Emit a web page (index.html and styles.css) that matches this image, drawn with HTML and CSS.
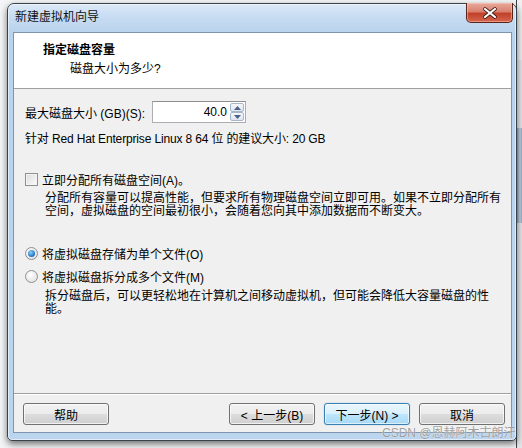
FILE: index.html
```html
<!DOCTYPE html>
<html lang="zh-CN">
<head>
<meta charset="utf-8">
<title>新建虚拟机向导</title>
<link rel="stylesheet" href="styles.css">
</head>
<body>
<div class="screen">
  <div class="side">
    <div class="side-thumb"></div>
  </div>
  <div class="window">
    <div class="titlebar">
      <span class="title">新建虚拟机向导</span>
      <div class="close">
        <svg width="16" height="12" viewBox="0 0 16 12"><path d="M3 2 L13 10 M13 2 L3 10" stroke="#3a1a14" stroke-width="3.6" stroke-linecap="round"/><path d="M3 2 L13 10 M13 2 L3 10" stroke="#ffffff" stroke-width="2.2" stroke-linecap="round"/></svg>
      </div>
    </div>
    <div class="client">
      <div class="header">
        <div class="h-title">指定磁盘容量</div>
        <div class="h-sub">磁盘大小为多少?</div>
      </div>
      <div class="body">
        <div class="size-row">
          <span class="size-label">最大磁盘大小 (GB)(S):</span>
          <div class="spin">
            <span class="spin-val">40.0</span>
            <div class="arrows">
              <div class="arrow up"><svg width="7" height="4" viewBox="0 0 7 4"><path d="M0 4 L3.5 0 L7 4 Z" fill="#4d6185"/></svg></div>
              <div class="arrow down"><svg width="7" height="4" viewBox="0 0 7 4"><path d="M0 0 L3.5 4 L7 0 Z" fill="#4d6185"/></svg></div>
            </div>
          </div>
        </div>
        <div class="hint">针对 Red Hat Enterprise Linux 8 64 位 的建议大小: 20 GB</div>
        <div class="opt-row check-row"><span class="checkbox"></span><span>立即分配所有磁盘空间(A)。</span></div>
        <p class="desc">分配所有容量可以提高性能，但要求所有物理磁盘空间立即可用。如果不立即分配所有<br>空间，虚拟磁盘的空间最初很小，会随着您向其中添加数据而不断变大。</p>
        <div class="opt-row radio-row first"><span class="radio on"></span><span>将虚拟磁盘存储为单个文件(O)</span></div>
        <div class="opt-row radio-row"><span class="radio"></span><span>将虚拟磁盘拆分成多个文件(M)</span></div>
        <p class="desc desc2">拆分磁盘后，可以更轻松地在计算机之间移动虚拟机，但可能会降低大容量磁盘的性<br>能。</p>
      </div>
      <div class="footer">
        <button class="btn help">帮助</button>
        <div class="nav">
          <button class="btn">&lt; 上一步(B)</button>
          <button class="btn default">下一步(N) &gt;</button>
          <button class="btn cancel">取消</button>
        </div>
      </div>
    </div>
  </div>
  <div class="watermark">CSDN @恩赫阿木古朗汗</div>
</div>
</body>
</html>
```

FILE: styles.css
```css
* { box-sizing: border-box; }

html, body {
  margin: 0;
  padding: 0;
}

body {
  width: 522px;
  height: 448px;
  overflow: hidden;
  background: #f4f5f6;
  font-family: "Liberation Sans", "Noto Sans CJK SC", sans-serif;
  font-size: 12px;
  color: #000;
}

.screen {
  position: relative;
  width: 522px;
  height: 448px;
  padding: 3px 0 0 7px;
}

.side {
  position: absolute;
  top: 0;
  right: 0;
  width: 6px;
  height: 448px;
  background: linear-gradient(to bottom, #eef0f2 0, #eef0f2 60px, #e4e7ea 60px);
  border-left: 1px solid #3f4348;
}

.side-thumb {
  margin-top: 128px;
  height: 95px;
  background: linear-gradient(to right, #8fa6bf, #c6d6e6 60%, #8fa6bf);
}

.window {
  position: relative;
  width: 510px;
  height: 438px;
  border: 1px solid #39414a;
  border-radius: 7px 7px 5px 5px;
  background: linear-gradient(to bottom, #c8ddf3 0, #b9d2ed 30px, #bcd5ef 100%);
  box-shadow: 0 3px 7px rgba(0, 0, 0, 0.55), inset 0 0 0 1px rgba(255, 255, 255, 0.55);
  display: flex;
  flex-direction: column;
}

.titlebar {
  height: 28px;
  display: flex;
  align-items: flex-start;
  padding-left: 7px;
  background: linear-gradient(to bottom, rgba(255,255,255,0.35) 0, rgba(255,255,255,0.1) 12px, rgba(255,255,255,0) 28px);
  border-radius: 6px 6px 0 0;
}

.title {
  margin-top: 5px;
  line-height: 16px;
  font-size: 12px;
  color: #111;
}

.close {
  margin-left: auto;
  margin-right: 3px;
  margin-top: -1px;
  width: 47px;
  height: 20px;
  border: 1px solid #5b2418;
  border-top: none;
  border-radius: 0 0 5px 5px;
  background: linear-gradient(to bottom, #e9a99b 0, #d9826f 45%, #c1412a 55%, #d6654c 100%);
  box-shadow: inset 0 0 0 1px rgba(255, 210, 200, 0.45);
  display: flex;
  align-items: center;
  justify-content: center;
}

.client {
  margin: 0 4px 7px 5px;
  flex: 1;
  border: 1px solid #7f95ad;
  background: #f0f0f0;
  display: flex;
  flex-direction: column;
}

.header {
  height: 56px;
  background: #fff;
  border-bottom: 1px solid #a0a0a0;
  padding: 9px 0 0 29px;
}

.h-title {
  font-weight: bold;
  line-height: 16px;
}

.h-sub {
  margin-top: 3px;
  padding-left: 27px;
  line-height: 16px;
}

.body {
  flex: 1;
  padding: 12px 0 0 11px;
}

.size-row {
  display: flex;
  align-items: center;
  height: 22px;
}

.size-label {
  width: 127px;
  white-space: nowrap;
}

.spin {
  width: 94px;
  height: 22px;
  background: #fff;
  border: 1px solid #abadb3;
  border-top-color: #8e8f8f;
  display: flex;
  align-items: center;
  justify-content: flex-end;
}

.spin-val {
  padding-right: 3px;
}

.arrows {
  width: 14px;
  height: 18px;
  margin-right: 1px;
  display: flex;
  flex-direction: column;
}

.arrow {
  flex: 1;
  border: 1px solid #a9b6c7;
  border-radius: 2px;
  background: linear-gradient(to bottom, #f4f7fb, #dde5ef);
  display: flex;
  align-items: center;
  justify-content: center;
}

.hint {
  margin-top: 9px;
  line-height: 14px;
  white-space: nowrap;
  letter-spacing: -0.15px;
}

.opt-row {
  display: flex;
  align-items: center;
  height: 14px;
  white-space: nowrap;
}

.check-row {
  margin-top: 26px;
}

.checkbox {
  width: 13px;
  height: 13px;
  border: 1px solid #8e8f8f;
  background: linear-gradient(135deg, #dcdcdc, #fbfbfb);
  box-shadow: inset 0 0 0 1px #f4f4f4;
  margin-right: 4px;
}

.desc {
  margin: 6px 0 0 20px;
  line-height: 13px;
  white-space: nowrap;
}

.radio-row.first {
  margin-top: 27px;
}

.radio-row {
  margin-top: 7px;
  height: 16px;
}

.radio {
  width: 13px;
  height: 13px;
  border-radius: 50%;
  border: 1px solid #8e8f8f;
  background: radial-gradient(circle at 40% 35%, #ffffff, #dadada);
  margin-right: 4px;
  display: flex;
  align-items: center;
  justify-content: center;
}

.radio.on::after {
  content: "";
  width: 7px;
  height: 7px;
  border-radius: 50%;
  background: radial-gradient(circle at 40% 35%, #8ed0f7, #1c6fc1 70%, #0e4c94);
}

.desc2 {
  margin-top: 6px;
}

.footer {
  height: 39px;
  border-top: 1px solid #a0a0a0;
  box-shadow: inset 0 1px 0 #ffffff;
  padding: 9px 6px 0 9px;
  display: flex;
  align-items: flex-start;
}

.nav {
  margin-left: auto;
  display: flex;
  gap: 9px;
}

.btn {
  width: 86px;
  height: 22px;
  padding: 0;
  font-family: "Liberation Sans", "Noto Sans CJK SC", sans-serif;
  font-size: 12px;
  color: #000;
  border: 1px solid #707070;
  border-radius: 3px;
  background: linear-gradient(to bottom, #f2f2f2 0, #ebebeb 50%, #dddddd 51%, #cfcfcf 100%);
  box-shadow: inset 0 0 0 1px rgba(255, 255, 255, 0.7);
}

.btn.default {
  border-color: #3c7fb1;
  background: linear-gradient(to bottom, #eaf6fd 0, #d9f0fc 50%, #bee6fd 51%, #a7d9f5 100%);
  box-shadow: inset 0 0 0 1px rgba(255, 255, 255, 0.6), 0 0 1px #48a0dc;
}

.watermark {
  position: absolute;
  left: 382px;
  top: 426px;
  font-size: 12px;
  line-height: 15px;
  color: rgba(140, 140, 140, 0.85);
  text-shadow: 0 0 1px #fff;
  white-space: nowrap;
}
```
